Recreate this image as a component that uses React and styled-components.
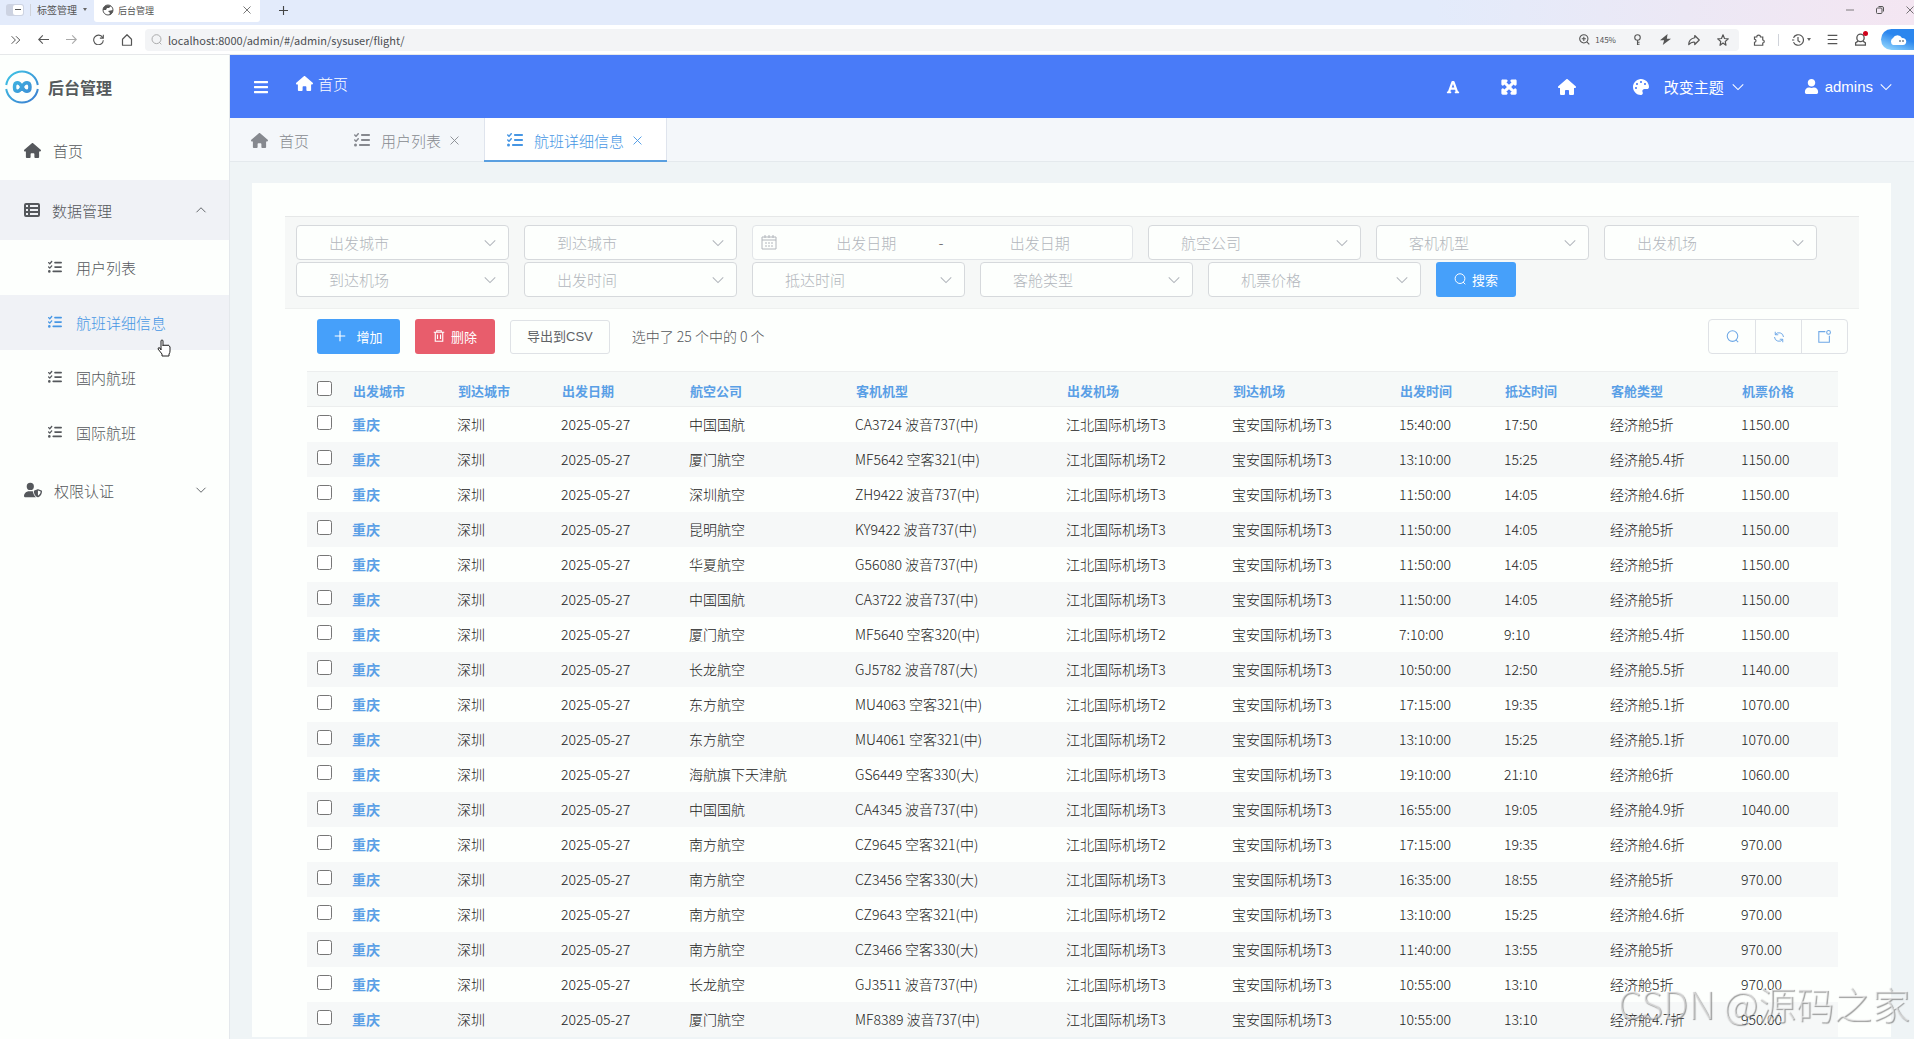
import React, { useState } from "react";
import styled, { createGlobalStyle } from "styled-components";
import { FaBars, FaExpandArrowsAlt, FaFont, FaPalette, FaUser } from "react-icons/fa";
import { FaHouse, FaListCheck, FaUserShield } from "react-icons/fa6";

const flights = [
  ["中国国航", "CA3724 波音737(中)", "T3", "15:40:00", "17:50", "5折", "1150.00"],
  ["厦门航空", "MF5642 空客321(中)", "T2", "13:10:00", "15:25", "5.4折", "1150.00"],
  ["深圳航空", "ZH9422 波音737(中)", "T3", "11:50:00", "14:05", "4.6折", "1150.00"],
  ["昆明航空", "KY9422 波音737(中)", "T3", "11:50:00", "14:05", "5折", "1150.00"],
  ["华夏航空", "G56080 波音737(中)", "T3", "11:50:00", "14:05", "5折", "1150.00"],
  ["中国国航", "CA3722 波音737(中)", "T3", "11:50:00", "14:05", "5折", "1150.00"],
  ["厦门航空", "MF5640 空客320(中)", "T2", "7:10:00", "9:10", "5.4折", "1150.00"],
  ["长龙航空", "GJ5782 波音787(大)", "T3", "10:50:00", "12:50", "5.5折", "1140.00"],
  ["东方航空", "MU4063 空客321(中)", "T2", "17:15:00", "19:35", "5.1折", "1070.00"],
  ["东方航空", "MU4061 空客321(中)", "T2", "13:10:00", "15:25", "5.1折", "1070.00"],
  ["海航旗下天津航", "GS6449 空客330(大)", "T3", "19:10:00", "21:10", "6折", "1060.00"],
  ["中国国航", "CA4345 波音737(中)", "T3", "16:55:00", "19:05", "4.9折", "1040.00"],
  ["南方航空", "CZ9645 空客321(中)", "T2", "17:15:00", "19:35", "4.6折", "970.00"],
  ["南方航空", "CZ3456 空客330(大)", "T3", "16:35:00", "18:55", "5折", "970.00"],
  ["南方航空", "CZ9643 空客321(中)", "T2", "13:10:00", "15:25", "4.6折", "970.00"],
  ["南方航空", "CZ3466 空客330(大)", "T3", "11:40:00", "13:55", "5折", "970.00"],
  ["长龙航空", "GJ3511 波音737(中)", "T3", "10:55:00", "13:10", "5折", "970.00"],
  ["厦门航空", "MF8389 波音737(中)", "T3", "10:55:00", "13:10", "4.7折", "950.00"],
];

const columns = [
  ["出发城市", 105],
  ["到达城市", 104],
  ["出发日期", 128],
  ["航空公司", 166],
  ["客机机型", 211],
  ["出发机场", 166],
  ["到达机场", 167],
  ["出发时间", 105],
  ["抵达时间", 106],
  ["客舱类型", 131],
  ["机票价格", 107],
];

const Stroke = ({ size = 14, w = 1.5, box = 16, children }) => (
  <svg
    width={size}
    height={size}
    viewBox={`0 0 ${box} ${box}`}
    fill="none"
    stroke="currentColor"
    strokeWidth={w}
    aria-hidden="true"
  >
    {children}
  </svg>
);

const Chevron = ({ up, size = 14, w = 1.2 }) => (
  <Stroke size={size} w={w}>
    <path d={up ? "M2 11l6-6 6 6" : "M2 5l6 6 6-6"} />
  </Stroke>
);

const Cross = ({ size = 9 }) => (
  <Stroke size={size} w={1.6}>
    <path d="M1 1l14 14M15 1L1 15" />
  </Stroke>
);

const SearchIcon = ({ size = 14 }) => (
  <Stroke size={size} w={1.3}>
    <circle cx="8" cy="7.5" r="6.500" />
    <path d="M12 12l3 3" />
  </Stroke>
);

const Logo = () => (
  <svg width="34" height="34" viewBox="0 0 34 34" fill="none" aria-hidden="true">
    <defs>
      <linearGradient id="logo" x1="0" y1="0" x2="34" y2="34" gradientUnits="userSpaceOnUse">
        <stop offset="0" stopColor="#3fc9e6" />
        <stop offset="1" stopColor="#3b78cf" />
      </linearGradient>
    </defs>
    <g stroke="url(#logo)">
      <path d="M1.200 15A16 16 0 0 1 32.800 15M1.200 19A16 16 0 0 0 32.800 19" strokeWidth="2" />
      <path
        d="M17 17C14 11 9.500 11.500 9.500 17S14 23 17 17S25 11.500 25 17S20 23 17 17"
        strokeWidth="3.500"
      />
    </g>
  </svg>
);

const Select = ({ label }) => (
  <SelectBox>
    <select aria-label={label} defaultValue="">
      <option value="">{label}</option>
    </select>
    <Chevron />
  </SelectBox>
);

const BrowserBar = () => (
  <Browser>
    <TabStrip>
      <TabManager>
        <Pill>
          <i />
        </Pill>
        <Split />
        标签管理
        <Caret />
      </TabManager>
      <BrowserTab>
        <svg width="12" height="12" viewBox="0 0 12 12" aria-hidden="true">
          <circle cx="6" cy="6" r="5" fill="#fff" stroke="#555" strokeWidth="1" />
          <path d="M1 5c1-3 4-5 8-3L7 4 5 4 4 6 1 6zM6 7l5-1c0 3-2 5-4 5L8 9z" fill="#555" />
        </svg>
        <span>后台管理</span>
        <Cross size={8} />
      </BrowserTab>
      <NewTab aria-label="新标签页">
        <Stroke size={9} w={2}>
          <path d="M8 0v16M0 8h16" />
        </Stroke>
      </NewTab>
      <WindowButtons>
        <Stroke size={8}>
          <path d="M0 8h16" />
        </Stroke>
        <Stroke size={8} w={2}>
          <rect x="1" y="4" width="11" height="11" rx="2" />
          <path d="M5 1h7q3 0 3 3v7" />
        </Stroke>
        <Cross size={8} />
      </WindowButtons>
    </TabStrip>
    <AddressRow>
      <NavIcons>
        <Stroke size={10} w={1.6}>
          <path d="M1 2l6 6-6 6M8 2l6 6-6 6" />
        </Stroke>
        <Stroke size={11} w={1.6}>
          <path d="M16 8H1M7 2L1 8l6 6" />
        </Stroke>
        <Faded>
          <Stroke size={11} w={1.6}>
            <path d="M0 8h15M9 2l6 6-6 6" />
          </Stroke>
        </Faded>
        <Stroke size={11} w={1.6}>
          <path d="M14 5A7 7 0 1 0 15 9M15 1v5h-5" />
        </Stroke>
        <Stroke size={12} w={1.6}>
          <path d="M2 7l6-6 6 6v8H2z" strokeLinejoin="round" />
        </Stroke>
      </NavIcons>
      <Address>
        <Faded>
          <SearchIcon size={11} />
        </Faded>
        <input aria-label="地址" defaultValue="localhost:8000/admin/#/admin/sysuser/flight/" />
        <Stroke size={11} w={1.6}>
          <circle cx="7" cy="7" r="6" />
          <path d="M11 11l4 4M4 7h6M7 4v6" />
        </Stroke>
        <Zoom>145%</Zoom>
        <AddressIcons>
          <Stroke size={11} w={1.6}>
            <circle cx="8" cy="5" r="4" />
            <path d="M8 9v7M8 12h3M8 15h3" />
          </Stroke>
          <svg width="11" height="11" viewBox="0 0 16 16" fill="currentColor" aria-hidden="true">
            <path d="M11 0L0 9h6l-2 7L16 7h-6z" />
          </svg>
          <Stroke size={12} w={1.6}>
            <path d="M9 2l6 6-6 6v-3C5 10 3 12 1 14c0-5 3-8 8-9z" strokeLinejoin="round" />
          </Stroke>
          <Stroke size={12} w={1.6}>
            <path d="M8 1l2 5 5 .5-4 3.500 1 5-4-3-4 3 1-5-4-3.500 5-.5z" strokeLinejoin="round" />
          </Stroke>
        </AddressIcons>
      </Address>
      <RightIcons>
        <Stroke size={12} w={1.6}>
          <path d="M2 4h3a2 2 0 0 1 5 0h3v4a2 2 0 0 1 0 4v3H2v-4a2 2 0 0 0 0-4z" />
        </Stroke>
        <Split />
        <HistoryIcon>
          <Stroke size={12} w={1.6}>
            <path d="M2 11A7 7 0 1 0 2 5M8 4v5l3 2M0 8h3" />
          </Stroke>
          <Caret />
        </HistoryIcon>
        <Stroke size={11} w={1.6}>
          <path d="M1 2h14M1 8h14M1 14h14" />
        </Stroke>
        <Profile>
          <Stroke size={13} w={1.6}>
            <circle cx="8" cy="6" r="4.500" />
            <path d="M5 10l-3 2v3h12v-3l-3-2" />
          </Stroke>
          <Dot />
        </Profile>
      </RightIcons>
      <CloudBadge>
        <svg width="18" height="12" viewBox="0 0 18 12" aria-hidden="true">
          <path d="M4 11a4 4 0 0 1 0-7 5 5 0 0 1 9 0c6 0 5 7 1 7z" fill="#fff" />
          <path d="M11 6v2M14 6v2" stroke="#345" />
        </svg>
      </CloudBadge>
    </AddressRow>
  </Browser>
);

const SideMenu = () => (
  <Sidebar>
    <Brand>
      <Logo />
      后台管理
    </Brand>
    <MenuItem href="#home">
      <FaHouse size={17} />
      <span>首页</span>
    </MenuItem>
    <MenuItem href="#data" $shaded>
      <Stroke size={16} w={2}>
        <rect x="1" y="2" width="14" height="12" rx="1" />
        <path d="M1 6h14M1 10h14M5 2v12" />
      </Stroke>
      <span>数据管理</span>
      <Chevron up size={12} />
    </MenuItem>
    {["用户列表", "航班详细信息", "国内航班", "国际航班"].map((name, i) => (
      <SubItem href={`#${name}`} key={name} $active={i === 1}>
        <FaListCheck size={14} />
        <span>{name}</span>
      </SubItem>
    ))}
    <MenuItem href="#auth">
      <FaUserShield size={18} />
      <span>权限认证</span>
      <Chevron size={12} />
    </MenuItem>
  </Sidebar>
);

const FlightTable = () => {
  const [checked, setChecked] = useState([]);
  const toggle = (i) =>
    setChecked(checked.includes(i) ? checked.filter((c) => c !== i) : [...checked, i]);

  return (
    <Table>
      <colgroup>
        <col width={35} />
        {columns.map(([name, width]) => (
          <col key={name} width={width} />
        ))}
      </colgroup>
      <thead>
        <tr>
          <CheckHead>
            <input
              type="checkbox"
              aria-label="全选"
              checked={checked.length === flights.length}
              onChange={(e) => setChecked(e.target.checked ? flights.map((_, i) => i) : [])}
            />
          </CheckHead>
          {columns.map(([name]) => (
            <th key={name}>{name}</th>
          ))}
        </tr>
      </thead>
      <tbody>
        {flights.map(([airline, plane, terminal, start, end, cabin, price], i) => (
          <tr key={plane}>
            <CheckCell>
              <input
                type="checkbox"
                aria-label={plane}
                checked={checked.includes(i)}
                onChange={() => toggle(i)}
              />
            </CheckCell>
            <td>
              <a href={`#${i}`}>重庆</a>
            </td>
            <td>深圳</td>
            <td>2025-05-27</td>
            <td>{airline}</td>
            <td>{plane}</td>
            <td>江北国际机场{terminal}</td>
            <td>宝安国际机场T3</td>
            <td>{start}</td>
            <td>{end}</td>
            <td>经济舱{cabin}</td>
            <td>{price}</td>
          </tr>
        ))}
      </tbody>
    </Table>
  );
};

const App = () => {
  return (
    <Page>
      <GlobalStyle />
      <BrowserBar />
      <Layout>
        <SideMenu />
        <Main>
          <Header>
            <IconButton aria-label="菜单">
              <FaBars size={16} />
            </IconButton>
            <Crumb href="#home">
              <FaHouse size={17} />
              首页
            </Crumb>
            <HeaderIcons>
              <IconButton aria-label="字体">
                <FaFont size={14} />
              </IconButton>
              <IconButton aria-label="全屏">
                <FaExpandArrowsAlt size={16} strokeWidth={40} stroke="currentColor" />
              </IconButton>
              <IconButton aria-label="主页">
                <FaHouse size={18} />
              </IconButton>
            </HeaderIcons>
            <ThemeButton>
              <FaPalette size={16} />
              <span>改变主题</span>
              <Chevron />
            </ThemeButton>
            <UserButton>
              <FaUser size={15} />
              admins
              <Chevron />
            </UserButton>
          </Header>
          <Tabs>
            <Tab href="#home" $first>
              <FaHouse size={17} />
              <span>首页</span>
            </Tab>
            <Tab href="#users">
              <FaListCheck size={16} />
              <span>用户列表</span>
              <Cross />
            </Tab>
            <Tab href="#flight" $active>
              <FaListCheck size={16} />
              <span>航班详细信息</span>
              <Cross />
            </Tab>
          </Tabs>
          <Card>
            <Filters>
              <Select label="出发城市" />
              <Select label="到达城市" />
              <DateRange>
                <Stroke size={16} w={1}>
                  <path d="M1 2h14v12H1zM1 5h14M4 0v3M8 0v3M12 0v3M4 8h2M7 8h2M10 8h2M4 11h2M7 11h2M10 11h2" />
                </Stroke>
                <input aria-label="开始日期" placeholder="出发日期" />
                <span>-</span>
                <input aria-label="结束日期" placeholder="出发日期" />
              </DateRange>
              <Select label="航空公司" />
              <Select label="客机机型" />
              <Select label="出发机场" />
              <Select label="到达机场" />
              <Select label="出发时间" />
              <Select label="抵达时间" />
              <Select label="客舱类型" />
              <Select label="机票价格" />
              <Button $color="#46a0fa">
                <SearchIcon size={12} />
                搜索
              </Button>
            </Filters>
            <Actions>
              <Button $color="#46a0fa" $wide>
                <Stroke size={12}>
                  <path d="M8 1v14M1 8h14" />
                </Stroke>
                增加
              </Button>
              <Button $color="#e85d6c">
                <Stroke size={12}>
                  <path d="M1 3h14M5 3V1h6v2M3 3v12h10V3M6 6v6M10 6v6" />
                </Stroke>
                删除
              </Button>
              <PlainButton>导出到CSV</PlainButton>
              <Count>选中了 25 个中的 0 个</Count>
              <Tools>
                <button aria-label="搜索">
                  <SearchIcon size={13} />
                </button>
                <button aria-label="刷新">
                  <Stroke size={12} w={1.3}>
                    <path d="M3 5a6 6 0 0 1 11 3M13 11A6 6 0 0 1 2 8M3 1v4h4M13 15v-4H9" />
                  </Stroke>
                </button>
                <button aria-label="新窗口">
                  <Stroke size={13} w={1.3}>
                    <path d="M9 2H1v13h13V7" />
                    <circle cx="13" cy="3" r="2.300" />
                  </Stroke>
                </button>
              </Tools>
            </Actions>
            <FlightTable />
          </Card>
        </Main>
      </Layout>
      <Hand width="14" height="18" viewBox="0 0 14 18" aria-hidden="true">
        <path
          d="M4 11V2q0-1 1-1t1 1v5q0-1 1-1t1 1q0-1 1-1t1 1q0-1 1-1t2 2v4q0 2-1 3v2H5v-2L1 10q0-2 2-1z"
          fill="#fff"
          stroke="#222"
        />
      </Hand>
      <Watermark>CSDN @源码之家</Watermark>
    </Page>
  );
};

export default App;

const GlobalStyle = createGlobalStyle`
  * {
    box-sizing: border-box;
  }

  body {
    margin: 0;
    overflow: hidden;
    font-family: "Noto Sans CJK SC", sans-serif;
    font-size: 15px;
    font-weight: 300;
    color: #55585c;
  }

  button, input, select {
    font-family: inherit;
    font-weight: inherit;
    margin: 0;
  }

  a {
    color: inherit;
    text-decoration: none;
  }

  svg {
    flex: none;
  }
`;

const Page = styled.div`
  display: flex;
  flex-direction: column;
  height: 100vh;
  overflow: hidden;
  background: #fdfffd;
`;

const Browser = styled.div`
  flex: none;
  color: #555;
  border-bottom: 1px solid #e6e8ea;
`;

const TabStrip = styled.div`
  display: flex;
  height: 25px;
  background: linear-gradient(90deg, #e3ebfb 0%, #e3ebfb 75%, #ece8f5 88%, #f4e6f2 100%);
`;

const TabManager = styled.div`
  display: flex;
  align-items: center;
  gap: 6px;
  width: 94px;
  height: 19px;
  padding-left: 6px;
  font-size: 10px;
  font-weight: 400;
  white-space: nowrap;
`;

const Pill = styled.span`
  display: flex;
  justify-content: flex-end;
  width: 18px;
  height: 12px;
  border-radius: 3px;
  background: #cdd3e2;

  i {
    width: 10px;
    margin: 1px;
    border-radius: 2px;
    background: linear-gradient(#555, #555) center / 6px 1px no-repeat #fff;
  }
`;

const Split = styled.span`
  width: 1px;
  height: 12px;
  background: #d0d3da;
`;

const Caret = styled.span`
  border: 2px solid transparent;
  border-top: 3px solid #666;
  border-bottom: 0;
`;

const BrowserTab = styled.div`
  display: flex;
  align-items: center;
  gap: 4px;
  width: 166px;
  height: 22px;
  padding: 0 9px 2px 8px;
  border-radius: 0 0 3px 3px;
  background: #fff;
  font-size: 9px;
  font-weight: 400;

  span {
    flex: 1;
  }
`;

const NewTab = styled.button`
  width: 46px;
  height: 20px;
  padding: 0;
  border: 0;
  background: none;
  color: #444;
  line-height: 1;
`;

const WindowButtons = styled.div`
  display: flex;
  align-items: center;
  gap: 22px;
  height: 20px;
  margin-left: auto;
`;

const AddressRow = styled.div`
  display: flex;
  align-items: center;
  height: 29px;
  background: #fff;
`;

const NavIcons = styled.div`
  display: flex;
  align-items: center;
  justify-content: space-between;
  width: 145px;
  padding: 0 12px 0 11px;
`;

const Faded = styled.span`
  display: flex;
  opacity: 0.5;
`;

const Address = styled.div`
  display: flex;
  flex: 1;
  align-items: center;
  height: 22px;
  padding: 0 10px 0 6px;
  border-radius: 4px;
  background: #f3f4f6;

  input {
    flex: 1;
    padding: 0 6px;
    border: 0;
    outline: 0;
    background: none;
    color: #4c4f53;
    font-size: 11px;
    font-weight: 400;
  }
`;

const Zoom = styled.span`
  margin: 0 16px 0 5px;
  font-size: 8px;
  font-weight: 400;
`;

const AddressIcons = styled.div`
  display: flex;
  gap: 17px;
`;

const RightIcons = styled.div`
  display: flex;
  align-items: center;
  gap: 13px;
  padding: 0 14px;
`;

const HistoryIcon = styled.span`
  display: flex;
  align-items: center;
  gap: 3px;
  margin-right: 3px;
`;

const Profile = styled.span`
  position: relative;
  display: flex;
  margin-left: 3px;
`;

const Dot = styled.i`
  position: absolute;
  top: -2px;
  right: -1px;
  width: 5px;
  height: 5px;
  border-radius: 50%;
  background: #d0021b;
`;

const CloudBadge = styled.div`
  display: flex;
  align-items: center;
  justify-content: center;
  width: 33px;
  height: 21px;
  border-radius: 11px 0 0 11px;
  background: linear-gradient(20deg, #9fe0ff, #2b86ee 60%);
`;

const Layout = styled.div`
  display: flex;
  flex: 1;
  min-height: 0;
`;

const Sidebar = styled.nav`
  flex: none;
  width: 230px;
  background: #fdfffd;
  border-right: 1px solid #e4e8ec;
`;

const Brand = styled.div`
  display: flex;
  align-items: center;
  gap: 9px;
  height: 65px;
  padding: 0 0 2px 5px;
  font-size: 16px;
  font-weight: bold;
  color: #555a5c;
`;

const MenuItem = styled.a`
  display: flex;
  align-items: center;
  height: 60px;
  padding: 0 22px 0 24px;
  background: ${(p) => (p.$shaded ? "#f0f2f6" : "none")};

  span {
    flex: 1;
    padding-left: 12px;
  }
`;

const SubItem = styled.a`
  display: flex;
  align-items: center;
  gap: 14px;
  height: 55px;
  padding: 0 0 1px 48px;
  color: ${(p) => (p.$active ? "#4696e4" : "inherit")};
  background: ${(p) => (p.$active ? "#f0f2f6" : "none")};
`;

const Main = styled.main`
  flex: 1;
  min-width: 0;
  background: #eff4f6;
`;

const Header = styled.header`
  display: flex;
  align-items: center;
  height: 63px;
  padding: 0 21px 0 23px;
  background: #497bf8;
  color: #fff;
`;

const IconButton = styled.button`
  display: flex;
  padding: 0;
  border: 0;
  background: none;
  color: inherit;
`;

const Crumb = styled.a`
  display: flex;
  align-items: center;
  gap: 5px;
  padding: 0 0 6px 27px;
`;

const HeaderIcons = styled.div`
  display: flex;
  align-items: center;
  gap: 41px;
  margin-left: auto;
`;

const ThemeButton = styled(IconButton)`
  align-items: center;
  gap: 7px;
  margin: 0 59px 0 57px;
  font-size: 15px;
  font-weight: 400;

  span {
    padding: 0 0 1px 8px;
  }
`;

const UserButton = styled(IconButton)`
  align-items: center;
  gap: 6px;
  font-family: "Liberation Sans", sans-serif;
  font-size: 15px;
`;

const Tabs = styled.nav`
  display: flex;
  height: 44px;
  background: #f4f7fa;
  border-bottom: 1px solid #e4e9ed;
`;

const Tab = styled.a`
  display: flex;
  align-items: center;
  height: 44px;
  padding: ${(p) => (p.$first ? "0 22px 0 21px" : "0 25px 0 23px")};
  color: ${(p) => (p.$active ? "#4696e4" : "#86898f")};
  background: ${(p) => (p.$active ? "#fff" : "none")};
  ${(p) =>
    p.$active &&
    "box-shadow: inset 0 -2px #5a9fe0, inset 1px 0 #dfe4ed, inset -1px 0 #dfe4ed;"}

  span {
    padding: 0 ${(p) => (p.$first ? 0 : 9)}px 0 11px;
  }
`;

const Card = styled.section`
  margin: 21px 23px 0 22px;
  padding: 33px 32px 0 33px;
  background: #fdfffd;
`;

const Filters = styled.form`
  display: flex;
  flex-wrap: wrap;
  gap: 2px 15px;
  padding: 8px 11px 11px;
  background: #f6f8f7;
  border-top: 1px solid #e6e8e8;
  border-bottom: 1px solid #eef0ef;
`;

const SelectBox = styled.label`
  display: grid;
  align-items: center;
  width: 213px;
  color: #b2b6bc;

  select,
  svg {
    grid-area: 1 / 1;
  }

  select {
    height: 35px;
    padding: 0 32px;
    border: 1px solid #d6d9dc;
    border-radius: 4px;
    appearance: none;
    background: #fdfffd;
    color: inherit;
    font-size: 15px;
  }

  svg {
    justify-self: end;
    margin-right: 12px;
    pointer-events: none;
  }
`;

const DateRange = styled.div`
  display: flex;
  align-items: center;
  width: 381px;
  height: 35px;
  padding: 0 20px 0 8px;
  border: 1px solid #e2e5e8;
  border-radius: 4px;
  background: #fdfffd;
  color: #b2b6bc;

  svg {
    margin-right: 17px;
  }

  span {
    width: 29px;
    color: #555;
  }

  input {
    flex: 1;
    min-width: 0;
    padding: 0;
    border: 0;
    background: none;
    font-size: 15px;
    text-align: center;
  }

  input::placeholder {
    color: #b2b6bc;
  }
`;

const Button = styled.button`
  display: flex;
  align-items: center;
  justify-content: center;
  gap: ${(p) => (p.$wide ? 10 : 6)}px;
  width: ${(p) => (p.$wide ? 83 : 80)}px;
  height: 35px;
  padding: 0 0 1px;
  border: 0;
  border-radius: 3px;
  background: ${(p) => p.$color};
  color: #fff;
  font-size: 13px;
  font-weight: 400;
`;

const Actions = styled.div`
  display: flex;
  align-items: center;
  gap: 15px;
  padding: 10px 11px 17px 32px;
`;

const PlainButton = styled.button`
  height: 34px;
  padding: 0 16px 2px;
  border: 1px solid #dfe2e6;
  border-radius: 3px;
  background: #fdfffd;
  color: #5f6266;
  font-family: "Liberation Sans", "Noto Sans CJK SC", sans-serif;
  font-size: 13px;
  font-weight: 400;
`;

const Count = styled.span`
  margin-left: 7px;
  padding-bottom: 2px;
  font-size: 14px;
`;

const Tools = styled.div`
  display: flex;
  margin-left: auto;
  border: 1px solid #dfe2e6;
  border-radius: 4px;

  button {
    display: flex;
    align-items: center;
    justify-content: center;
    width: 46px;
    height: 33px;
    padding: 0;
    border: 0;
    background: none;
    color: #6ea8e6;
  }

  button + button {
    border-left: 1px solid #dfe2e6;
  }
`;

const Table = styled.table`
  width: calc(100% - 43px);
  margin-left: 22px;
  table-layout: fixed;
  border-collapse: separate;
  border-spacing: 0;
  font-size: 14px;
  color: #222;

  th {
    height: 36px;
    padding: 2px 0 0 11px;
    border-top: 1px solid #eceeee;
    border-bottom: 1px solid #eceeee;
    background: #f6f9f8;
    color: #5a9fe6;
    font-size: 13px;
    text-align: left;
  }

  td {
    height: 35px;
    padding: 0 0 2px 10px;
    line-height: 20px;
    white-space: nowrap;
  }

  tr:nth-child(even) td {
    background: #f6f8f8;
  }

  a {
    color: #5a9fe6;
    font-weight: bold;
  }

  input {
    display: block;
    width: 15px;
    height: 15px;
  }
`;

const CheckHead = styled.th`
  && {
    padding: 0 0 2px 10px;
  }
`;

const CheckCell = styled.td`
  && {
    padding: 0 0 4px 10px;
  }
`;

const Hand = styled.svg`
  position: fixed;
  left: 157px;
  top: 339px;
`;

const Watermark = styled.div`
  position: fixed;
  right: 4px;
  bottom: 12px;
  font-size: 38px;
  line-height: 48px;
  color: rgba(255, 255, 255, 0.5);
  text-shadow: 1px 1px 1px rgba(90, 90, 90, 0.6);
  pointer-events: none;
`;
